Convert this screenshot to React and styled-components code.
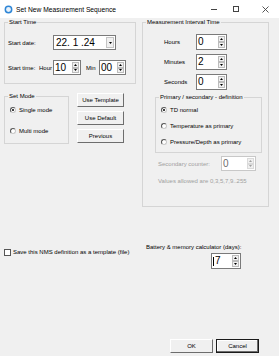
import React from 'react';
import styled, { createGlobalStyle } from 'styled-components';

const GlobalStyle = createGlobalStyle`
  html, body { margin: 0; padding: 0; background: #f0f0f0; }
  body { font-family: "Liberation Sans", Arial, sans-serif; font-size: 6px; color: #000; }
  * { box-sizing: border-box; }
`;

const Window = styled.div`
  width: 279px;
  height: 356px;
  display: flex;
  flex-direction: column;
  background: #f0f0f0;
  overflow: hidden;
`;

const TitleBar = styled.div`
  height: 18px;
  flex-shrink: 0;
  background: #fff;
  display: flex;
  align-items: center;
  padding-left: 4px;
`;

const TitleText = styled.span`
  font-size: 6.7px;
  margin-left: 3px;
  color: #000;
`;

const Controls = styled.div`
  margin-left: auto;
  display: flex;
  height: 100%;
`;

const ControlBtn = styled.div`
  width: ${p => p.$w}px;
  padding-left: ${p => p.$pl || 0}px;
  height: 100%;
  display: flex;
  align-items: center;
  justify-content: center;
`;

const Body = styled.div`
  padding: 4px 0 0 4px;
  display: flex;
  flex-direction: column;
`;

const TopArea = styled.div`
  display: flex;
  align-items: flex-start;
`;

const LeftCol = styled.div`
  width: 132px;
  display: flex;
  flex-direction: column;
`;

const RightCol = styled.div`
  width: 127px;
  margin-left: 6px;
`;

const Group = styled.div`
  position: relative;
  width: ${p => p.$w}px;
  height: ${p => p.$h}px;
  margin-top: ${p => p.$mt || 0}px;
  margin-left: ${p => p.$ml || 0}px;
  border: 1px solid #d5d5d5;
  padding: ${p => p.$pad || '0'};
  display: flex;
  flex-direction: column;
  flex-shrink: 0;
`;

const Legend = styled.span`
  position: absolute;
  top: -5px;
  left: 3px;
  padding: 0 1px;
  line-height: 8px;
  background: #f0f0f0;
  white-space: nowrap;
`;

const Row = styled.div`
  display: flex;
  align-items: center;
  height: ${p => p.$h || 15}px;
  margin-top: ${p => p.$mt || 0}px;
  padding-left: ${p => p.$pl || 0}px;
`;

const Label = styled.span`
  width: ${p => (p.$w ? `${p.$w}px` : 'auto')};
  margin-left: ${p => p.$ml || 0}px;
  flex-shrink: 0;
  white-space: nowrap;
  color: ${p => (p.$disabled ? '#a0a0a0' : '#000')};
  line-height: 8px;
`;

const Combo = styled.div`
  width: ${p => p.$w}px;
  height: 15px;
  background: #fff;
  border: 1px solid #7a7a7a;
  display: flex;
  padding: 1px;
`;

const ComboText = styled.span`
  flex: 1;
  font-size: 10px;
  line-height: 11px;
  padding-left: 1px;
`;

const ComboButton = styled.div`
  width: 8px;
  background: #f0f0f0;
  border: 1px solid #c4c4c4;
  display: flex;
  align-items: center;
  justify-content: center;
`;

const Spin = styled.div`
  width: ${p => p.$w}px;
  height: ${p => p.$h || 15}px;
  flex-shrink: 0;
  background: #fff;
  border: 1px solid ${p => (p.$disabled ? '#c8c8c8' : '#7a7a7a')};
  display: flex;
  padding: 1px;
`;

const SpinValue = styled.span`
  flex: 1;
  display: flex;
  align-items: center;
  font-size: 10px;
  line-height: 10px;
  color: ${p => (p.$disabled ? '#6d6d6d' : '#000')};
`;

const Caret = styled.span`
  width: 1px;
  height: 9px;
  background: #000;
  margin-right: 1px;
`;

const SpinArrows = styled.div`
  width: 7px;
  display: flex;
  flex-direction: column;
`;

const ArrowBtn = styled.div`
  flex: 1;
  background: #f0f0f0;
  border: 1px solid ${p => (p.$disabled ? '#dadada' : '#bcbcbc')};
  display: flex;
  align-items: center;
  justify-content: center;
`;

const ModeRow = styled.div`
  display: flex;
  align-items: flex-start;
  margin-top: 9px;
`;

const ButtonCol = styled.div`
  display: flex;
  flex-direction: column;
  gap: 4px;
  margin-left: 8px;
`;

const Button = styled.div`
  width: ${p => p.$w}px;
  height: 14px;
  background: #f0f0f0;
  border: 1px solid;
  border-color: ${p => (p.$default ? '#1a1a1a' : '#fff #6d6d6d #6d6d6d #fff')};
  box-shadow: ${p => (p.$default ? 'inset -1px -1px 0 #6d6d6d, inset 1px 1px 0 #fff' : 'none')};
  display: flex;
  align-items: center;
  justify-content: center;
  white-space: nowrap;
`;

const RadioRow = styled.div`
  display: flex;
  align-items: center;
  gap: 3px;
  height: ${p => p.$h}px;
  margin-top: ${p => p.$mt || 0}px;
`;

const RadioCircle = styled.span`
  width: 6px;
  height: 6px;
  border-radius: 50%;
  background: #fff;
  border: 1px solid;
  border-color: #555 #c8c8c8 #c8c8c8 #555;
  display: flex;
  align-items: center;
  justify-content: center;
  flex-shrink: 0;
`;

const RadioDot = styled.span`
  width: 2px;
  height: 2px;
  border-radius: 50%;
  background: #000;
`;

const BottomRow = styled.div`
  display: flex;
  align-items: flex-start;
  margin-top: 36px;
`;

const CheckLabel = styled.div`
  width: 142px;
  margin-top: 5px;
  height: 8px;
  display: flex;
  align-items: center;
  gap: 2px;
  white-space: nowrap;
`;

const CheckBox = styled.span`
  width: 7px;
  height: 7px;
  background: #fff;
  border: 1px solid #555;
  flex-shrink: 0;
`;

const Battery = styled.div`
  width: 95px;
  display: flex;
  flex-direction: column;
  align-items: flex-end;
  gap: 2px;
`;

const BatteryLabel = styled.span`
  align-self: flex-start;
  line-height: 8px;
  white-space: nowrap;
`;

const Footer = styled.div`
  margin-top: auto;
  display: flex;
  justify-content: flex-end;
  gap: 3px;
  padding: 0 20px 3px 0;
`;

const Tri = ({ down, disabled }) => (
  <svg width="3" height="2" viewBox="0 0 3 2">
    <polygon points={down ? '0,0 3,0 1.5,2' : '0,2 3,2 1.5,0'} fill={disabled ? '#a0a0a0' : '#000'} />
  </svg>
);

const SpinBox = ({ value, w, h, disabled, caret }) => (
  <Spin $w={w} $h={h} $disabled={disabled}>
    <SpinValue $disabled={disabled}>
      {caret && <Caret />}
      {value}
    </SpinValue>
    <SpinArrows>
      <ArrowBtn $disabled={disabled}><Tri disabled={disabled} /></ArrowBtn>
      <ArrowBtn $disabled={disabled}><Tri down disabled={disabled} /></ArrowBtn>
    </SpinArrows>
  </Spin>
);

const Radio = ({ checked, label, h, mt }) => (
  <RadioRow $h={h} $mt={mt}>
    <RadioCircle>{checked && <RadioDot />}</RadioCircle>
    <Label>{label}</Label>
  </RadioRow>
);

export default function App() {
  return (
    <>
      <GlobalStyle />
      <Window>
        <TitleBar>
          <svg width="9" height="9" viewBox="0 0 9 9">
            <circle cx="4.5" cy="4.5" r="3.2" fill="#e8f2fb" stroke="#2f86d6" strokeWidth="1.5" />
          </svg>
          <TitleText>Set New Measurement Sequence</TitleText>
          <Controls>
            <ControlBtn $w={22}>
              <svg width="6" height="1" viewBox="0 0 6 1"><rect width="6" height="1" fill="#444" /></svg>
            </ControlBtn>
            <ControlBtn $w={22}>
              <svg width="6" height="6" viewBox="0 0 6 6"><rect x="0.5" y="0.5" width="5" height="5" fill="none" stroke="#444" strokeWidth="1" /></svg>
            </ControlBtn>
            <ControlBtn $w={32} $pl={4}>
              <svg width="7" height="7" viewBox="0 0 7 7"><path d="M0.5 0.5 L6.5 6.5 M6.5 0.5 L0.5 6.5" stroke="#444" strokeWidth="0.9" /></svg>
            </ControlBtn>
          </Controls>
        </TitleBar>

        <Body>
          <TopArea>
            <LeftCol>
              <Group $w={132} $h={62} $pad="12px 0 0 3px">
                <Legend>Start Time</Legend>
                <Row>
                  <Label $w={45}>Start date:</Label>
                  <Combo $w={63}>
                    <ComboText>22. 1 .24</ComboText>
                    <ComboButton><Tri down /></ComboButton>
                  </Combo>
                </Row>
                <Row $mt={10}>
                  <Label $w={31}>Start time:</Label>
                  <Label $w={14}>Hour</Label>
                  <SpinBox value="10" w={28} />
                  <Label $w={13} $ml={5}>Min</Label>
                  <SpinBox value="00" w={27} />
                </Row>
              </Group>

              <ModeRow>
                <Group $w={65} $h={48} $mt={3} $pad="7px 0 0 5px">
                  <Legend>Set Mode</Legend>
                  <Radio checked label="Single mode" h={12} />
                  <Radio label="Multi mode" h={12} mt={9} />
                </Group>
                <ButtonCol>
                  <Button $w={47}>Use Template</Button>
                  <Button $w={47}>Use Default</Button>
                  <Button $w={47}>Previous</Button>
                </ButtonCol>
              </ModeRow>
            </LeftCol>

            <RightCol>
              <Group $w={127} $h={185} $pad="11px 0 0 0">
                <Legend>Measurement Interval Time</Legend>
                <Row $h={16} $pl={21}>
                  <Label $w={32}>Hours</Label>
                  <SpinBox value="0" w={31} h={16} />
                </Row>
                <Row $h={16} $pl={21} $mt={4}>
                  <Label $w={32}>Minutes</Label>
                  <SpinBox value="2" w={31} h={16} />
                </Row>
                <Row $h={16} $pl={21} $mt={4}>
                  <Label $w={32}>Seconds</Label>
                  <SpinBox value="0" w={31} h={16} />
                </Row>

                <Group $w={107} $h={56} $mt={7} $ml={12} $pad="4px 0 0 5px">
                  <Legend>Primary / secondary - definition</Legend>
                  <Radio checked label="TD normal" h={16} />
                  <Radio label="Temperature as primary" h={16} />
                  <Radio label="Pressure/Depth as primary" h={16} />
                </Group>

                <Row $mt={3} $pl={15}>
                  <Label $w={63} $disabled>Secondary counter:</Label>
                  <SpinBox value="0" w={35} disabled />
                </Row>
                <Row $h={8} $mt={6} $pl={15}>
                  <Label $disabled>Values allowed are 0,3,5,7,9..255</Label>
                </Row>
              </Group>
            </RightCol>
          </TopArea>

          <BottomRow>
            <CheckLabel>
              <CheckBox />
              <span>Save this NMS definition as a template (file)</span>
            </CheckLabel>
            <Battery>
              <BatteryLabel>Battery &amp; memory calculator (days):</BatteryLabel>
              <SpinBox value="7" w={30} h={16} caret />
            </Battery>
          </BottomRow>
        </Body>

        <Footer>
          <Button $w={43}>OK</Button>
          <Button $w={43} $default>Cancel</Button>
        </Footer>
      </Window>
    </>
  );
}
